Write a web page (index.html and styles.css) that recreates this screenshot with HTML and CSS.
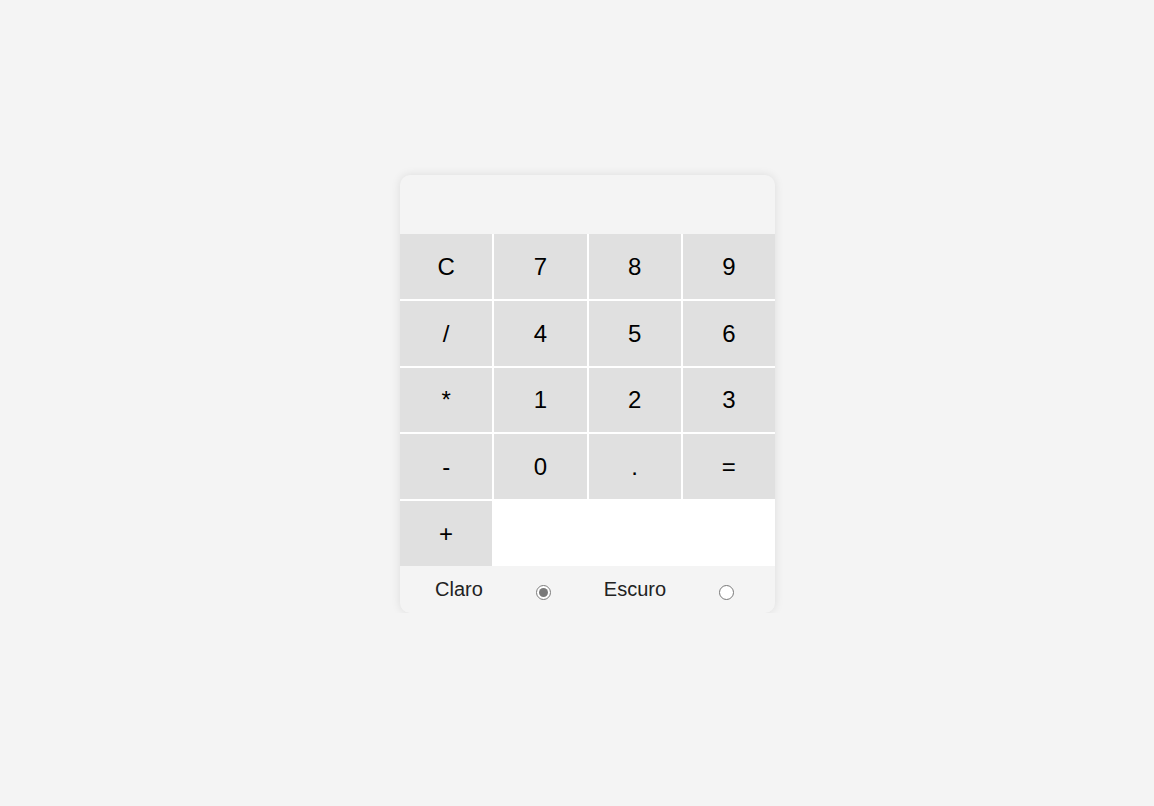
FILE: index.html
```html
<!DOCTYPE html>
<html lang="pt">
<head>
<meta charset="utf-8">
<title>Calculadora</title>
<link rel="stylesheet" href="styles.css">
</head>
<body>
<main class="page">
  <div class="calc">
    <div class="display"></div>
    <div class="keys">
      <button class="key">C</button>
      <button class="key">7</button>
      <button class="key">8</button>
      <button class="key">9</button>
      <button class="key">/</button>
      <button class="key">4</button>
      <button class="key">5</button>
      <button class="key">6</button>
      <button class="key">*</button>
      <button class="key">1</button>
      <button class="key">2</button>
      <button class="key">3</button>
      <button class="key">-</button>
      <button class="key">0</button>
      <button class="key">.</button>
      <button class="key">=</button>
      <button class="key">+</button>
    </div>
    <div class="theme">
      <label class="theme-label" for="claro">Claro</label>
      <input class="theme-radio" type="radio" name="tema" id="claro" checked>
      <label class="theme-label" for="escuro">Escuro</label>
      <input class="theme-radio" type="radio" name="tema" id="escuro">
    </div>
  </div>
</main>
</body>
</html>
```
FILE: styles.css
```css
html, body {
  margin: 0;
  padding: 0;
  background: #f4f4f4;
  font-family: "Liberation Sans", Arial, sans-serif;
}

.page {
  padding: 175px 0 0 400px;
}

.calc {
  width: 375px;
  background: #f4f4f4;
  border-radius: 10px;
  box-shadow: 0 0 10px rgba(0, 0, 0, 0.1);
  overflow: hidden;
}

.display {
  height: 59px;
}

.keys {
  display: grid;
  grid-template-columns: repeat(4, 1fr);
  grid-auto-rows: 64.8px;
  gap: 2px;
  background: #ffffff;
}

.key {
  border: none;
  margin: 0;
  padding: 1px 0 0;
  background: #e0e0e0;
  color: #000;
  font-family: "Liberation Sans", Arial, sans-serif;
  font-size: 24px;
  display: flex;
  align-items: center;
  justify-content: center;
}

.theme {
  height: 47px;
  display: flex;
  align-items: center;
  justify-content: flex-start;
  gap: 53px;
  padding-left: 35px;
}

.theme-label {
  font-size: 20px;
  color: #222;
}

.theme-radio {
  width: 15px;
  height: 15px;
  margin: 7px 0 0 0;
  accent-color: #7a7a7a;
}
```
